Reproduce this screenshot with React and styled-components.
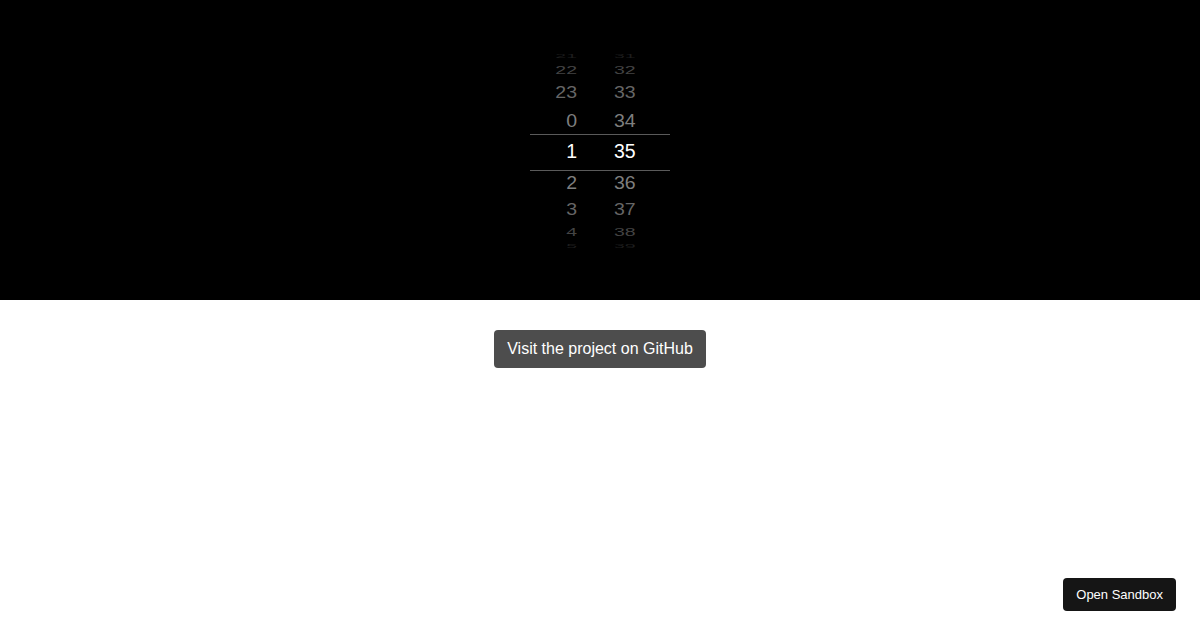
import styled, { createGlobalStyle } from 'styled-components';

const GlobalStyle = createGlobalStyle`
  html, body {
    margin: 0;
    padding: 0;
    background: #fff;
    font-family: "Liberation Sans", Arial, sans-serif;
  }
`;

const Page = styled.div`
  width: 100%;
  min-height: 630px;
  position: relative;
`;

const Stage = styled.section`
  height: 300px;
  background: #000;
  box-sizing: border-box;
  padding-top: 52px;
  display: flex;
  justify-content: center;
  align-items: flex-start;
`;

const Picker = styled.div`
  position: relative;
  width: 140px;
  height: 200px;
  display: flex;
  overflow: hidden;
`;

const Selection = styled.div`
  position: absolute;
  left: 0;
  right: 0;
  top: 82px;
  height: 35px;
  border-top: 1px solid #5a5a5a;
  border-bottom: 1px solid #5a5a5a;
  pointer-events: none;
`;

const Column = styled.div`
  position: relative;
  flex: 1;
  height: 100%;
`;

const Item = styled.div`
  position: absolute;
  left: 0;
  right: 0;
  top: 50%;
  height: 36px;
  margin-top: -19px;
  line-height: 36px;
  font-size: 19.5px;
  text-align: ${(p) => p.$align};
  padding: ${(p) => (p.$align === 'right' ? '0 23px 0 0' : '0 0 0 14px')};
  box-sizing: border-box;
  white-space: nowrap;
`;

const STEP = 18;
const RADIUS = 100;

const Wheel = ({ values, align }) => (
  <Column>
    {values.map((v, i) => {
      const k = i - 4;
      const a = (k * STEP * Math.PI) / 180;
      const cos = Math.cos(a);
      const grey = k === 0 ? 255 : Math.round(135 * Math.pow(cos, 1.3));
      return (
        <Item
          key={v}
          $align={align}
          style={{
            transform: `translateY(${RADIUS * Math.sin(a)}px) scaleY(${cos})`,
            color: `rgb(${grey},${grey},${grey})`,
          }}
        >
          {v}
        </Item>
      );
    })}
  </Column>
);

const Content = styled.main`
  display: flex;
  justify-content: center;
  padding-top: 30px;
`;

const GithubButton = styled.a`
  display: inline-flex;
  align-items: center;
  height: 38px;
  padding: 0 13px;
  border-radius: 4px;
  background: #4d4d4d;
  color: #fff;
  font-size: 16px;
  text-decoration: none;
`;

const SandboxButton = styled.a`
  position: absolute;
  right: 24px;
  bottom: 19px;
  height: 33px;
  padding: 0 13px;
  display: inline-flex;
  align-items: center;
  border-radius: 4px;
  background: #151515;
  color: #fff;
  font-family: "Liberation Sans", Arial, sans-serif;
  font-size: 13px;
  text-decoration: none;
`;

const hours = ['21', '22', '23', '0', '1', '2', '3', '4', '5'];
const minutes = ['31', '32', '33', '34', '35', '36', '37', '38', '39'];

export default function App() {
  return (
    <Page>
      <GlobalStyle />
      <Stage>
        <Picker>
          <Wheel values={hours} align="right" />
          <Wheel values={minutes} align="left" />
          <Selection />
        </Picker>
      </Stage>
      <Content>
        <GithubButton href="#">Visit the project on GitHub</GithubButton>
      </Content>
      <SandboxButton href="#">Open Sandbox</SandboxButton>
    </Page>
  );
}
